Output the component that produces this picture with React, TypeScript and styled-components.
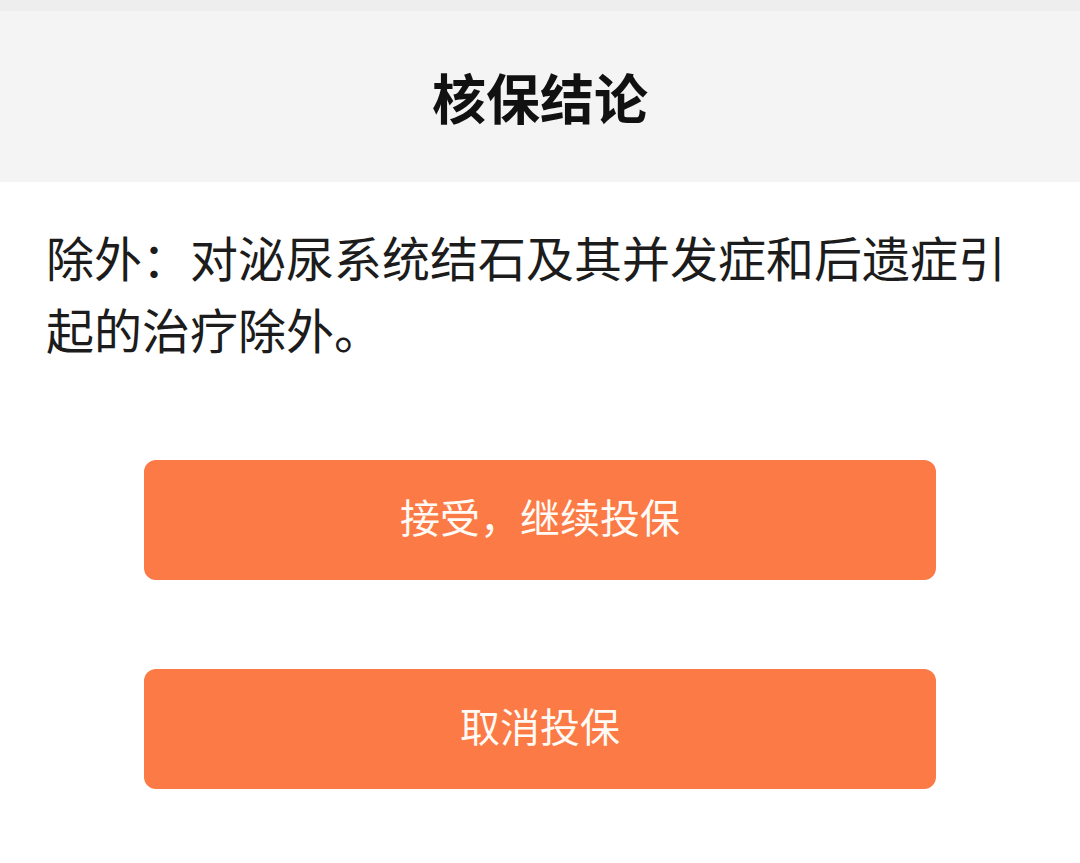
import React from "react";
import styled, { createGlobalStyle } from "styled-components";

const GlobalStyle = createGlobalStyle`
  html, body {
    margin: 0;
    padding: 0;
    background: #ffffff;
  }
  body {
    font-family: "Noto Sans CJK SC", "Noto Sans", sans-serif;
  }
  * { box-sizing: border-box; }
`;

const Page = styled.div`
  width: 1080px;
  min-height: 863px;
  background: #ffffff;
  display: flex;
  flex-direction: column;
`;

const StatusStrip = styled.div`
  height: 11px;
  background: #eeeeee;
`;

const Header = styled.header`
  height: 171px;
  background: #f4f4f4;
  display: flex;
  align-items: center;
  justify-content: center;
`;

const Title = styled.h1`
  margin: 0;
  font-size: 54px;
  font-weight: 700;
  color: #111111;
  line-height: 1;
  letter-spacing: 0;
`;

const Content = styled.section`
  padding: 38px 46px 0;
`;

const Conclusion = styled.p`
  margin: 0;
  font-size: 48px;
  line-height: 72px;
  color: #1c1c1c;
  font-weight: 400;
`;

const Actions = styled.div`
  margin-top: 96px;
  padding: 0 144px;
  display: flex;
  flex-direction: column;
  gap: 89px;
`;

const ActionButton = styled.button`
  height: 120px;
  width: 100%;
  border: none;
  border-radius: 12px;
  background: #fc7a45;
  color: #fffaf5;
  font-family: "Noto Sans CJK SC", "Noto Sans", sans-serif;
  font-size: 40px;
  font-weight: 400;
  display: flex;
  align-items: center;
  justify-content: center;
  padding: 0 0 8px;
  cursor: pointer;
`;

export default function App() {
  return (
    <>
      <GlobalStyle />
      <Page>
        <StatusStrip />
        <Header>
          <Title>核保结论</Title>
        </Header>
        <Content>
          <Conclusion>除外：对泌尿系统结石及其并发症和后遗症引起的治疗除外。</Conclusion>
        </Content>
        <Actions>
          <ActionButton>接受，继续投保</ActionButton>
          <ActionButton>取消投保</ActionButton>
        </Actions>
      </Page>
    </>
  );
}
